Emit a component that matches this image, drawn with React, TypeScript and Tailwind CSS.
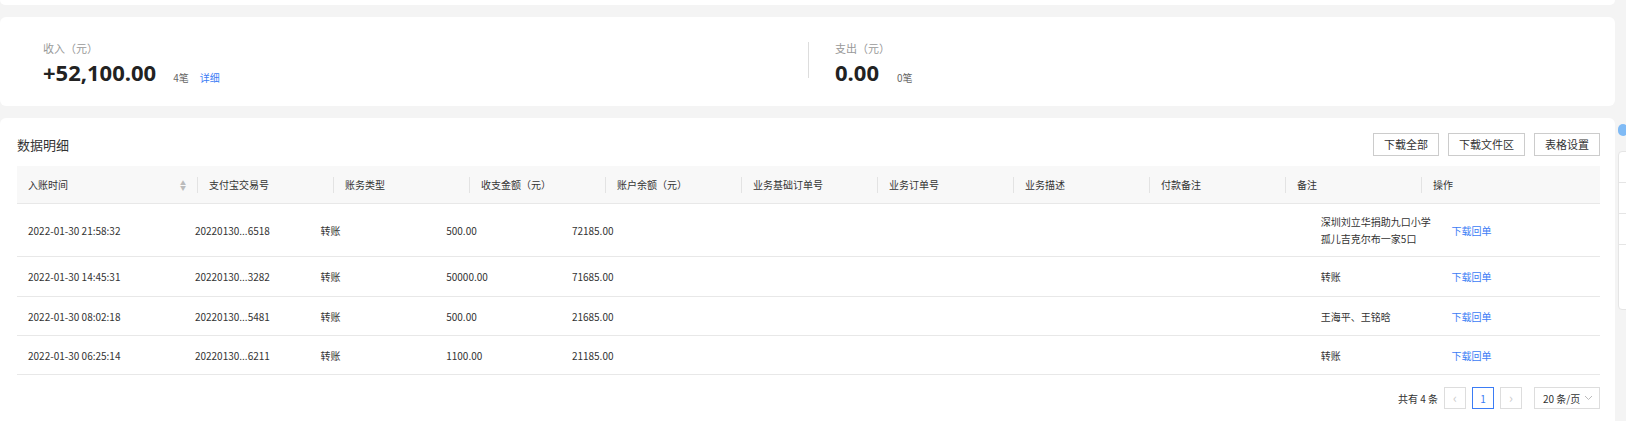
import React from "react";

const cols = ["入账时间","支付宝交易号","账务类型","收支金额（元）","账户余额（元）","业务基础订单号","业务订单号","业务描述","付款备注","备注","操作"];
const widths = [180,136,136,136,136,136,136,136,136,136,179];
const rows = [
  { t:"2022-01-30 21:58:32", id:"20220130...6518", amt:"500.00", bal:"72185.00", note:["深圳刘立华捐助九口小学","孤儿吉克尔布一家5口"], h:53 },
  { t:"2022-01-30 14:45:31", id:"20220130...3282", amt:"50000.00", bal:"71685.00", note:["转账"], h:40 },
  { t:"2022-01-30 08:02:18", id:"20220130...5481", amt:"500.00", bal:"21685.00", note:["王海平、王铭晗"], h:39 },
  { t:"2022-01-30 06:25:14", id:"20220130...6211", amt:"1100.00", bal:"21185.00", note:["转账"], h:39 },
];

export default function App() {
  return (
    <div className="relative w-[1626px] h-[421px] overflow-hidden bg-[#f4f4f4] text-[#333]" style={{fontFamily:'"Noto Sans CJK SC","Noto Sans",sans-serif'}}>
      <div className="w-[1615px] flex flex-col">
        <div className="h-[5px] bg-white rounded-b-md" />
        <div className="mt-[12px] h-[89px] bg-white rounded-md flex items-start pt-[23px]">
          <div className="w-[808px] pl-[43px]">
            <div className="text-[11px] text-[#999] leading-[17px]">收入（元）</div>
            <div className="flex items-end mt-[2px]">
              <span className="text-[22px] font-bold leading-[27px] text-[#222]" style={{fontFamily:'"Open Sans",sans-serif'}}>+52,100.00</span>
              <span className="ml-[17px] text-[10px] text-[#666] mb-[1px]">4笔</span>
              <span className="ml-[11px] text-[10px] text-[#3b7cf5] mb-[1px]">详细</span>
            </div>
          </div>
          <div className="w-px h-[36px] bg-[#ddd] mt-[2px]" />
          <div className="pl-[26px]">
            <div className="text-[11px] text-[#999] leading-[17px]">支出（元）</div>
            <div className="flex items-end mt-[2px]">
              <span className="text-[22px] font-bold leading-[27px] text-[#222]" style={{fontFamily:'"Open Sans",sans-serif'}}>0.00</span>
              <span className="ml-[18px] text-[10px] text-[#666] mb-[1px]">0笔</span>
            </div>
          </div>
        </div>
        <div className="mt-[12px] h-[320px] bg-white rounded-md pl-[17px]">
          <div className="flex items-center h-[48px] pt-[5px]">
            <span className="text-[13px] text-[#333]">数据明细</span>
            <div className="ml-auto flex gap-[9px] mr-[15px]">
              {["下载全部","下载文件区","表格设置"].map(b=>(
                <div key={b} className="h-[23px] px-[10px] border border-[#ccc] text-[11px] leading-[21px] text-[#333]">{b}</div>
              ))}
            </div>
          </div>
          <div className="w-[1583px]">
            <div className="flex h-[38px] bg-[#f8f8f8] border-b border-[#e8e8e8] items-center">
              {cols.map((c,i)=>(
                <div key={c} style={{width:widths[i]}} className={`h-full flex items-center text-[10px] text-[#333] ${i===0?"pl-[11px]":"pl-[12px]"} relative`}>
                  {i>0 && <div className="absolute left-0 top-[11px] h-[16px] w-px bg-[#e3e3e3]" />}
                  <span>{c}</span>
                  {i===0 && <span className="ml-auto mr-[11px] flex flex-col text-[#bbb] text-[6px] leading-[5px]"><span>▲</span><span>▼</span></span>}
                </div>
              ))}
            </div>
            {rows.map(r=>(
              <div key={r.t} style={{height:r.h}} className="flex items-center border-b border-[#e8e8e8] text-[10px] text-[#333]">
                <div style={{width:180}} className="pl-[11px]">{r.t}</div>
                <div style={{width:136}} className="pl-[12px]">{r.id}</div>
                <div style={{width:136}} className="pl-[12px]">转账</div>
                <div style={{width:136}} className="pl-[12px]">{r.amt}</div>
                <div style={{width:136}} className="pl-[12px]">{r.bal}</div>
                <div style={{width:680}} />
                <div style={{width:136}} className="pl-[12px] leading-[17px] whitespace-nowrap">{r.note.map(n=><div key={n}>{n}</div>)}</div>
                <div style={{width:179}} className="pl-[17px] text-[#3b7cf5]">下载回单</div>
              </div>
            ))}
          </div>
          <div className="flex items-center justify-end h-[46px] w-[1583px] text-[10px] text-[#333]">
            <span className="mr-[6px]">共有 4 条</span>
            <div className="w-[22px] h-[22px] border border-[#ddd] flex items-center justify-center text-[#ccc] text-[13px]">‹</div>
            <div className="ml-[6px] w-[22px] h-[22px] border border-[#3b7cf5] text-[#3b7cf5] flex items-center justify-center">1</div>
            <div className="ml-[6px] w-[22px] h-[22px] border border-[#ddd] flex items-center justify-center text-[#ccc] text-[13px]">›</div>
            <div className="ml-[12px] w-[66px] h-[22px] border border-[#ddd] flex items-center pl-[8px]">20 条/页
              <svg className="ml-auto mr-[6px]" width="9" height="6" viewBox="0 0 9 6"><path d="M1 1l3.5 3.5L8 1" fill="none" stroke="#bbb" strokeWidth="1"/></svg>
            </div>
          </div>
        </div>
      </div>
      <div className="absolute left-[1618px] top-[124px] w-[10px] h-[12px] rounded-full bg-[#7fbaf5]" />
      <div className="absolute left-[1618px] top-[151px] w-[12px] h-[159px] bg-white border border-[#e5e5e5] rounded-l-sm flex flex-col">
        <div className="h-[31px] border-b border-[#e5e5e5]" />
        <div className="h-[31px] border-b border-[#e5e5e5]" />
        <div className="h-[31px] border-b border-[#e5e5e5]" />
      </div>
    </div>
  );
}
